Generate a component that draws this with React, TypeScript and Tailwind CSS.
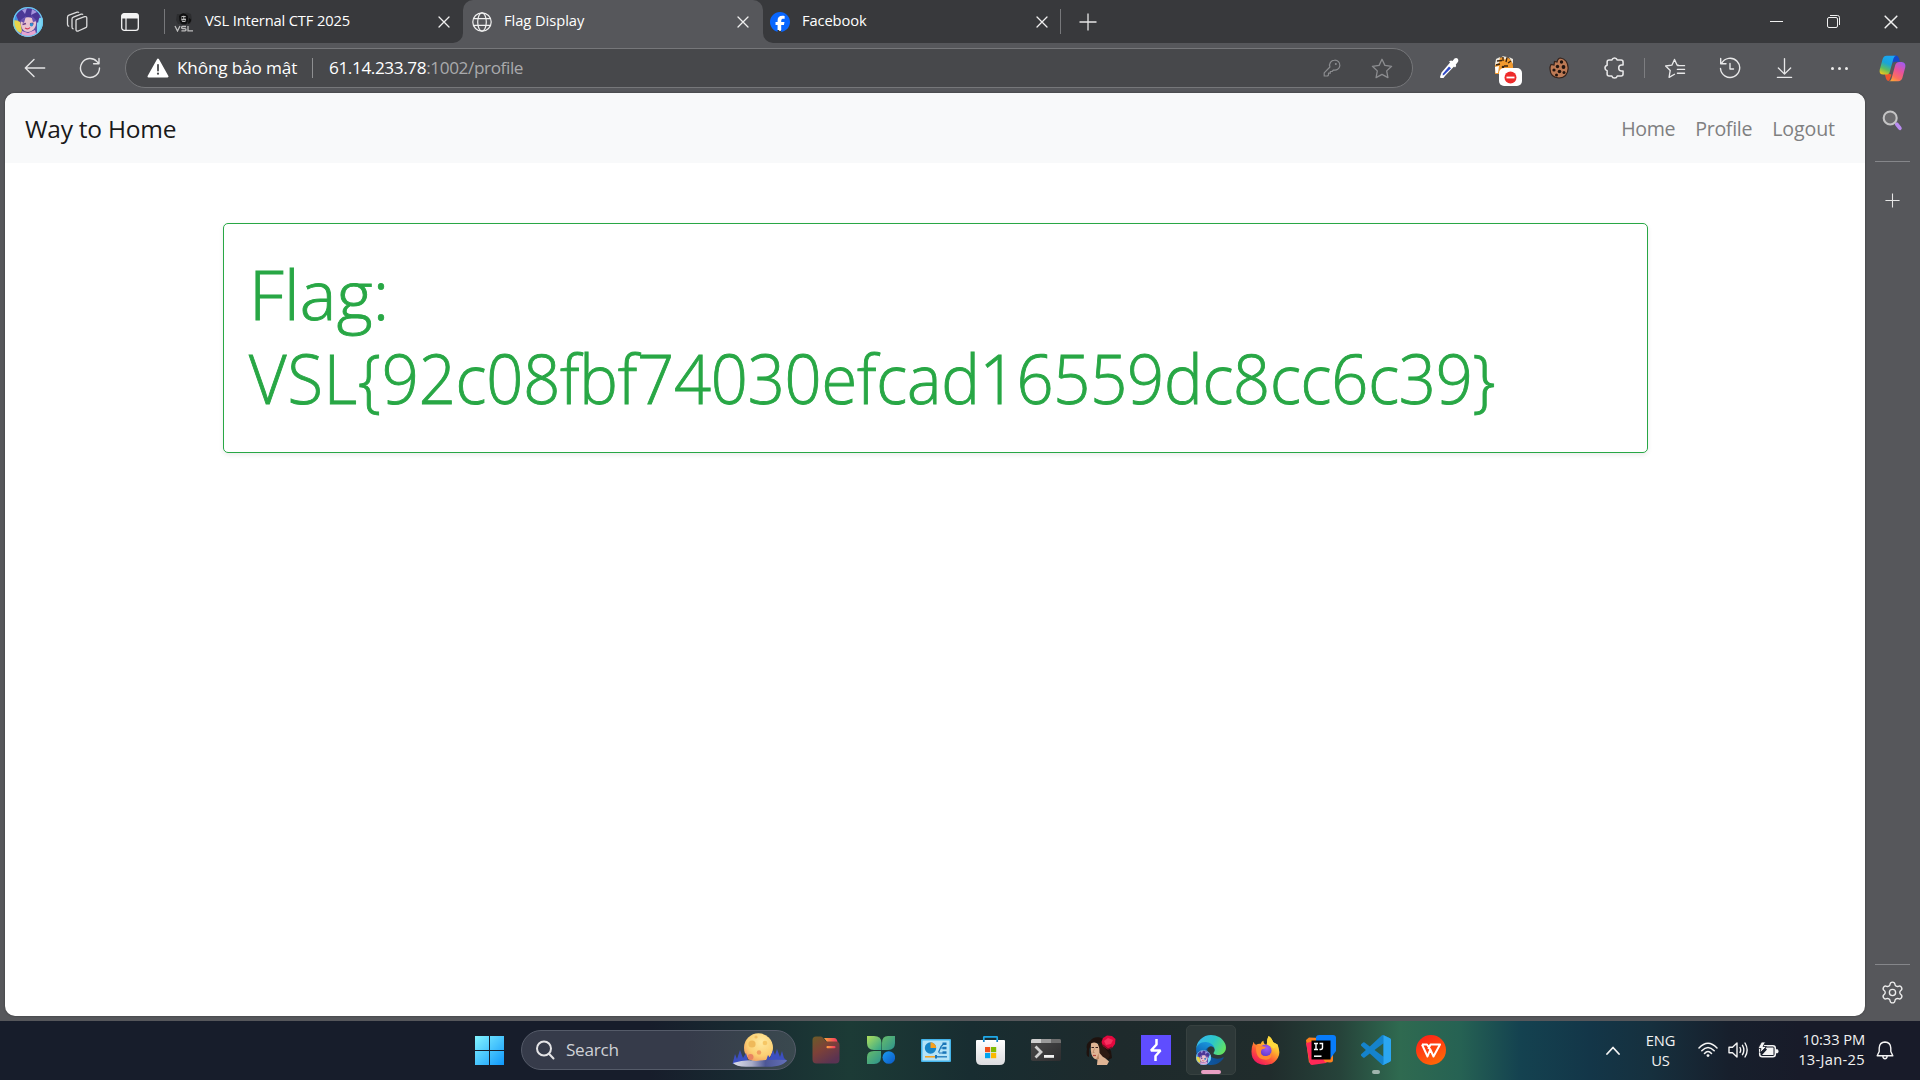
import React from "react";
import { Settings } from "lucide-react";
import { FaFacebook } from "react-icons/fa6";

type P = { className?: string };

/* ---------- Browser chrome icons ---------- */

function Avatar({ className }: P) {
  return (
    <svg viewBox="0 0 30 30" className={className}>
      <defs>
        <clipPath id="avc"><circle cx="15" cy="15" r="15" /></clipPath>
      </defs>
      <g clipPath="url(#avc)">
        <rect width="30" height="30" fill="#5a4fa8" />
        <path d="M0 6 6 3 5 14 0 18Z" fill="#4a8fe0" />
        <path d="M0 13 7 14 9 24 5 30 0 30Z" fill="#e8d54a" />
        <path d="M24 12 30 10V24L24 28Z" fill="#7fd6f5" />
        <path d="M3 8C8 0 22-1 27 7L25 16 20 11 13 10 6 15Z" fill="#4b3796" />
        <path d="M9 3 14 1 12 7ZM19 2 24 5 18 8Z" fill="#a593dc" />
        <path d="M8 14C10 9 20 9 23 14 24 21 19 25 15 25 10 25 7 20 8 14Z" fill="#e9c3cf" />
        <path d="M7 14 13 9 11 16ZM24 14 18 8 20 15Z" fill="#6a52b0" />
        <path d="M9.500 17.500 13 16.500M17 17 20.500 16.500" stroke="#6d3f88" strokeWidth="1.800" />
        <circle cx="18.500" cy="17.800" r="1.700" fill="#2e8fd0" />
        <path d="M12 21Q15 23 17 20.500" stroke="#d0405c" strokeWidth="1.200" fill="none" />
        <path d="M9 24 15 26 22 23 24 30H7Z" fill="#e7a4d0" />
        <path d="M4 24 9 27 8 30H2Z" fill="#8a3fb0" />
      </g>
      <circle cx="15" cy="15" r="14.300" fill="none" stroke="#69cdf0" strokeWidth="1.200" />
    </svg>
  );
}

function Workspaces({ className }: P) {
  return (
    <svg viewBox="0 0 22 22" className={className} fill="none" stroke="#dcdcdd" strokeWidth="1.300" strokeLinejoin="round">
      <path d="M10.500 8.600 18.600 5.700Q20.800 5.200 20.800 7.200V15Q20.800 16.200 19.700 16.700L12.300 20Q10 20.600 10 18.600V9.600Q10 8.900 10.500 8.600Z" />
      <path d="M17 3.600Q16.500 2.800 15.200 3.200L7.400 6.100Q6 6.700 6 8V16.200Q6 17.800 7.600 17.800" />
      <path d="M13 1.600Q12.400.8 11.200 1.200L3 4.200Q1.500 4.800 1.500 6.200V13.500Q1.500 15.300 3.200 15.300" />
    </svg>
  );
}

function TabActions({ className }: P) {
  return (
    <svg viewBox="0 0 18 18" className={className}>
      <rect x=".7" y=".7" width="16.600" height="16.600" rx="2.600" fill="none" stroke="#f3f3f3" strokeWidth="1.300" />
      <path d="M.5 5.400V3Q.5.5 3 .5H15Q17.500.5 17.500 3V5.400Z" fill="#f3f3f3" />
      <path d="M5 5V17" stroke="#f3f3f3" strokeWidth="1.200" />
    </svg>
  );
}

function VslFavicon({ className }: P) {
  return (
    <svg viewBox="0 0 20 20" className={className}>
      <path d="M3 2 7 2 13 .5 17 2 18 8 16 12 4 12 2 8Z" fill="#2c2d2f" />
      <path d="M5 4Q9-1.500 14 4V9L12 12.500H8L5.500 9Z" fill="#0f0f10" />
      <path d="M7.300 4.500Q9.500 3 12 4.500V7.500L11.300 10H8.300L7.300 7.500Z" fill="#bdbdbd" />
      <path d="M7.600 5H9.300V6.700H7.600ZM10.300 5H11.900V6.700H10.300ZM8.300 8H11.300V8.800H8.300Z" fill="#161616" />
      <path d="M15 6Q18 7 16.500 10L14 12Z" fill="#0e0e0e" />
      <path d="M1 14 3.500 19 6 14M12 14.500H8.600Q7.600 14.500 7.600 15.500T8.600 16.600H11Q12 16.600 12 17.700T11 18.800H7.400M14 14V18.800H19" fill="none" stroke="#bdbdbd" strokeWidth="1.300" />
    </svg>
  );
}

function Cross({ className }: P) {
  return (
    <svg viewBox="0 0 12 12" className={className} stroke="#f0f0f0" strokeWidth="1.300" strokeLinecap="round">
      <path d="M1 1 11 11M11 1 1 11" />
    </svg>
  );
}

function Globe({ className }: P) {
  return (
    <svg viewBox="0 0 20 20" className={className} fill="none" stroke="#f0f0f0" strokeWidth="1.200">
      <circle cx="10" cy="10" r="9.200" />
      <ellipse cx="10" cy="10" rx="4.300" ry="9.200" />
      <path d="M1.500 6.600H18.500M1.500 13.400H18.500" />
    </svg>
  );
}

function PlusIcon({ className }: P) {
  return (
    <svg viewBox="0 0 18 18" className={className} stroke="#e6e6e6" strokeWidth="1.300">
      <path d="M9 .5V17.500M.5 9H17.500" />
    </svg>
  );
}

function Back({ className }: P) {
  return (
    <svg viewBox="0 0 22 20" className={className} fill="none" stroke="#e4e4e5" strokeWidth="1.400" strokeLinecap="round" strokeLinejoin="round">
      <path d="M10 1.500 1.300 10 10 18.500M1.600 10H20.700" />
    </svg>
  );
}

function Reload({ className }: P) {
  return (
    <svg viewBox="0 0 22 22" className={className} fill="none" stroke="#e4e4e5" strokeWidth="1.400" strokeLinecap="round" strokeLinejoin="round">
      <path d="M20.500 11A9.500 9.500 0 1 1 18 4.600L19.800 6.500M20 1.500V6.700H14.600" />
    </svg>
  );
}

function Warning({ className }: P) {
  return (
    <svg viewBox="0 0 22 20" className={className}>
      <path d="M11 1.500 20.500 18.500H1.500Z" fill="#fff" stroke="#fff" strokeWidth="2" strokeLinejoin="round" />
      <path d="M11 6.800V12.500" stroke="#47484b" strokeWidth="1.800" strokeLinecap="round" />
      <circle cx="11" cy="15.700" r="1.100" fill="#47484b" />
    </svg>
  );
}

function KeyIcon({ className }: P) {
  return (
    <svg viewBox="0 0 18 18" className={className} fill="none" stroke="#8c8d90" strokeWidth="1.200" strokeLinejoin="round">
      <path d="M11.500 1.200A5 5 0 1 1 10.500 11L9 12.500H7.300V14.200H5.500V16L4.600 17H1.200V13.800L6.900 8A5 5 0 0 1 11.500 1.200Z" />
      <circle cx="12.800" cy="5" r="1" fill="#8c8d90" stroke="none" />
    </svg>
  );
}

function Star({ className }: P) {
  return (
    <svg viewBox="0 0 22 21" className={className} fill="none" stroke="#8c8d90" strokeWidth="1.300" strokeLinejoin="round">
      <path d="M11 1.300 13.900 7.400 20.600 8.300 15.700 12.900 16.900 19.600 11 16.400 5.100 19.600 6.300 12.900 1.400 8.300 8.100 7.400Z" />
    </svg>
  );
}

function Eyedropper({ className }: P) {
  return (
    <svg viewBox="0 0 20 22" className={className}>
      <path d="M11.500 5 2.500 15.500 1 20 1.500 21H4.500L6 19 15.500 9Z" fill="#fff" />
      <path d="M10 9.500 4 16.500 3.600 18.600 5 18 12 11.200Z" fill="#2f49c8" />
      <path d="M10 4.500 12 3.500 13.500 4 15.500 1.500Q17.500.3 19 2 20 4 18.500 5.500L16.800 7.500 17.200 9 16 10.500Z" fill="#fff" />
    </svg>
  );
}

function TigerBlocked({ className }: P) {
  return (
    <svg viewBox="0 0 30 32" className={className}>
      <path d="M3 13Q3 3 12 3Q21 3 21 13V20H3Z" fill="#f29a2e" />
      <path d="M3 11 4 5 8 3 7 9ZM10 2 15 3 13 6ZM17 3 21 5 21 10Z" fill="#ece8e0" />
      <path d="M3 13 7 12 6 19H3.500Z" fill="#fff" />
      <path d="M5 7 10 6.500M4 11 8 10M11 3V7M15 3.500 14 8M19 7 16 9M12 12H16" stroke="#3a2410" strokeWidth="1.300" />
      <circle cx="11" cy="13" r="1.300" fill="#3a2410" />
      <rect x="7" y="14" width="23" height="18" rx="5" fill="#fff" />
      <circle cx="18.500" cy="23.500" r="6" fill="#ee2b2b" />
      <rect x="14.500" y="22.600" width="8" height="1.800" fill="#fff" />
    </svg>
  );
}

function CookieIcon({ className }: P) {
  return (
    <svg viewBox="0 0 20 22" className={className}>
      <path d="M11.500 1Q18.800 2.500 19.200 11 18.800 20.500 10 21 1.300 20.500 1 12 .8 9.500 2 7.500L5 8 5.500 4.500 8 5Q9 1 11.500 1Z" fill="#bd7a55" stroke="#33231d" strokeWidth="1.200" />
      <g fill="#21140f">
        <circle cx="12.500" cy="5" r="1.700" /><circle cx="8.500" cy="9.500" r="1.700" /><circle cx="14.500" cy="10" r="1.900" />
        <circle cx="5" cy="13" r="1.600" /><circle cx="10.500" cy="14.500" r="1.800" /><circle cx="15" cy="15.500" r="1.500" /><circle cx="7.500" cy="18" r="1.500" />
      </g>
    </svg>
  );
}

function PuzzleIcon({ className }: P) {
  return (
    <svg viewBox="0 0 20 22" className={className} fill="none" stroke="#e8e8e9" strokeWidth="1.400" strokeLinejoin="round">
      <path d="M8 3.700A2.600 2.600 0 0 1 13 3.700H16.500Q18.300 3.700 18.300 5.500V8.300H17A2.700 2.700 0 0 0 17 13.700H18.300V16.500Q18.300 18.300 16.500 18.300H13A2.600 2.600 0 0 1 8 18.300H5.500Q3.700 18.300 3.700 16.500V13.600A2.700 2.700 0 0 1 3.700 8.400V5.500Q3.700 3.700 5.500 3.700Z" />
    </svg>
  );
}

function FavList({ className }: P) {
  return (
    <svg viewBox="0 0 22 22" className={className} fill="none" stroke="#e8e8e9" strokeWidth="1.400" strokeLinejoin="round" strokeLinecap="round">
      <path d="M14.500 7.500H13.300L10.500 1.500 7.700 7.500 1.200 8.400 6 13 4.800 20.300 10.500 17M14 8H21M13.500 12H21M13.500 16H21" />
    </svg>
  );
}

function HistoryIcon({ className }: P) {
  return (
    <svg viewBox="0 0 22 22" className={className} fill="none" stroke="#e8e8e9" strokeWidth="1.400" strokeLinejoin="round" strokeLinecap="round">
      <path d="M2.500 6.500A9.600 9.600 0 1 1 1.500 11.500M1.700 1.500V6.800H7M11 6.500V12H14.500" />
    </svg>
  );
}

function DownloadIcon({ className }: P) {
  return (
    <svg viewBox="0 0 18 22" className={className} fill="none" stroke="#e8e8e9" strokeWidth="1.400" strokeLinejoin="round" strokeLinecap="round">
      <path d="M9 1V17M2.500 11 9 17.500 15.500 11M1.500 21H16.500" />
    </svg>
  );
}

function Copilot({ className }: P) {
  return (
    <svg viewBox="0 0 28 28" className={className}>
      <defs>
        <linearGradient id="cp1" x1=".6" y1="0" x2=".2" y2="1">
          <stop offset="0" stopColor="#1aa6f5" /><stop offset=".4" stopColor="#19a4d8" /><stop offset=".7" stopColor="#5cbd62" /><stop offset="1" stopColor="#f2c81a" />
        </linearGradient>
        <linearGradient id="cp2" x1=".8" y1="0" x2=".3" y2="1">
          <stop offset="0" stopColor="#a05bf0" /><stop offset=".45" stopColor="#e8529a" /><stop offset=".8" stopColor="#fb6f5c" /><stop offset="1" stopColor="#fba13c" />
        </linearGradient>
      </defs>
      <path d="M15 .5H17.500Q20 .7 20.800 3.500L21.700 7H17Q14.500 7 13.800 9.500Z" fill="#1547c8" />
      <path d="M6 20 11 19.500 13 20.500 10.500 27Q8 27 7.300 24.500Z" fill="#f0542c" />
      <path d="M8 .7H17.500Q15.700 1.200 15 3.700L11.300 17Q10.400 20.300 7 20.300H4.500Q0 20.300.7 15.500L3.700 4.300Q4.800.7 8 .7Z" fill="url(#cp1)" />
      <path d="M20 27.300H10.500Q12.300 26.800 13 24.300L16.700 11Q17.600 7.200 21 7.200H23.500Q28 7.500 27.300 12.500L24.300 23.700Q23.200 27.300 20 27.300Z" fill="url(#cp2)" />
    </svg>
  );
}

function SideSearch({ className }: P) {
  return (
    <svg viewBox="0 0 20 20" className={className}>
      <path d="M14 13.500 17 17.300" stroke="#b98cf0" strokeWidth="3.600" strokeLinecap="round" />
      <circle cx="7.800" cy="7.600" r="6.200" fill="#6b6b6e" stroke="#c4c4c5" strokeWidth="2" />
    </svg>
  );
}

/* ---------- Taskbar icons ---------- */

function Windows({ className }: P) {
  return (
    <svg viewBox="0 0 29 29" className={className}>
      <defs>
        <linearGradient id="win" x1="0" y1="0" x2="1" y2="1" gradientUnits="objectBoundingBox">
          <stop offset="0" stopColor="#83f4ff" /><stop offset="1" stopColor="#0f97fb" />
        </linearGradient>
      </defs>
      <path d="M0 0H14V14H0ZM15 0H29V14H15ZM0 15H14V29H0ZM15 15H29V29H15Z" fill="url(#win)" />
    </svg>
  );
}

function MoonScene({ className }: P) {
  return (
    <svg viewBox="0 0 56 34" className={className}>
      <defs>
        <radialGradient id="moon" cx=".6" cy=".3" r=".8">
          <stop offset="0" stopColor="#ffe9a0" /><stop offset=".6" stopColor="#fbcf72" /><stop offset="1" stopColor="#ef8f5c" />
        </radialGradient>
        <linearGradient id="snow">
          <stop offset="0" stopColor="#dfe0ea" /><stop offset=".35" stopColor="#a9acc8" /><stop offset=".6" stopColor="#4d5796" /><stop offset="1" stopColor="#6470b8" />
        </linearGradient>
      </defs>
      <circle cx="26.500" cy="14.800" r="14.500" fill="url(#moon)" />
      <circle cx="20" cy="11" r="3.600" fill="#efb95a" /><circle cx="33" cy="10" r="2.300" fill="#f6c766" />
      <circle cx="27" cy="19.500" r="2.200" fill="#f1a05e" /><circle cx="18.500" cy="24" r="3" fill="#e98461" /><circle cx="24" cy="4" r="1.600" fill="#f3c063" />
      <path d="M.5 31 3 21 5 26 8 17 11 25 14 20 16 28 17 30ZM34 28 36 22 38 25 41 17 43 22 45 16 48 24 50 18 52 25 55 28 50 31H36Z" fill="#3c4fc0" />
      <path d="M1 30Q14 26 24 28 40 26 55 27 52 33.500 36 33.800H14Q4 33.500 1 30Z" fill="url(#snow)" />
    </svg>
  );
}

function Files({ className }: P) {
  return (
    <svg viewBox="0 0 28 28" className={className}>
      <defs>
        <linearGradient id="fl" x1="0" y1="0" x2=".6" y2="1"><stop offset="0" stopColor="#6b5c28" /><stop offset=".5" stopColor="#7d4138" /><stop offset="1" stopColor="#5a3352" /></linearGradient>
        <linearGradient id="fl2"><stop offset="0" stopColor="#ffa53d" /><stop offset="1" stopColor="#f23560" /></linearGradient>
      </defs>
      <path d="M12 2H22Q25 2 25.500 6H15Z" fill="url(#fl2)" />
      <path d="M.5 4Q.5.5 4 .5H9Q10.500.5 12 3L14 5.500H24Q27.500 5.500 27.500 9V23.500Q27.500 27.500 23.500 27.500H4.500Q.5 27.500.5 23.500Z" fill="url(#fl)" />
      <rect x="14.500" y="10" width="9" height="2.200" rx="1" fill="url(#fl2)" />
    </svg>
  );
}

function Clover({ className }: P) {
  return (
    <svg viewBox="0 0 28 28" className={className}>
      <defs>
        <linearGradient id="c1" x1="0" y1="0" x2="1" y2="1"><stop offset="0" stopColor="#aedd5c" /><stop offset="1" stopColor="#2fa58c" /></linearGradient>
        <linearGradient id="c2" x1="0" y1="0" x2="1" y2="1"><stop offset="0" stopColor="#67bc6a" /><stop offset="1" stopColor="#2b938f" /></linearGradient>
        <linearGradient id="c3" x1="0" y1="0" x2="1" y2="1"><stop offset="0" stopColor="#1b9bf0" /><stop offset="1" stopColor="#0b59c8" /></linearGradient>
      </defs>
      <path d="M0 0H7Q14.500 0 14.500 7V14H7Q0 14 0 7Z" fill="url(#c1)" />
      <path d="M28 0V7Q28 14 21 14H15V7Q15 0 21 0Z" fill="url(#c2)" />
      <path d="M0 28V21Q0 15 7 15H14V21Q14 28 7 28Z" fill="url(#c2)" />
      <circle cx="21.800" cy="21.500" r="6.300" fill="url(#c3)" />
    </svg>
  );
}

function ControlPanel({ className }: P) {
  return (
    <svg viewBox="0 0 30 23" className={className}>
      <rect width="30" height="23" rx="1" fill="#45b4ea" />
      <rect x="1.500" y="1.500" width="27" height="20" fill="#b4e3f8" />
      <circle cx="9.500" cy="9" r="5.700" fill="#1785c8" />
      <path d="M9.500 9V3.300A5.700 5.700 0 0 1 15.200 9Z" fill="#f8a01c" />
      <path d="M17.500 13.500 20 7.500 23 4.500M19 9H22M18 14H22" stroke="#1a75b8" strokeWidth="1.200" fill="none" />
      <rect x="21.500" y="3.500" width="4" height="2.500" fill="#1a75b8" /><rect x="21.500" y="7.800" width="4" height="2.500" fill="#1a75b8" /><rect x="21.500" y="12.300" width="4" height="2.500" fill="#1a75b8" />
      <path d="M4 17.800H14" stroke="#f8a01c" strokeWidth="1.500" /><path d="M14 17.800H26" stroke="#1a75b8" strokeWidth="1.300" />
      <rect x="14" y="16" width="2" height="3.500" fill="#1a75b8" />
    </svg>
  );
}

function Store({ className }: P) {
  return (
    <svg viewBox="0 0 29 29" className={className}>
      <defs><linearGradient id="st" x1="0" y1="0" x2="0" y2="1"><stop offset="0" stopColor="#fff" /><stop offset="1" stopColor="#dcdcdf" /></linearGradient></defs>
      <path d="M7.800 6V1.300Q7.800.8 8.300.8H20.700Q21.200.8 21.200 1.300V6" fill="none" stroke="#1fa9e8" strokeWidth="1.700" />
      <path d="M0 5Q0 4 1 4H28Q29 4 29 5V23.500Q29 29 23.500 29H5.500Q0 29 0 23.500Z" fill="url(#st)" />
      <path d="M7.800 4V6M21.200 4V6" stroke="#1785c8" strokeWidth="1.700" />
      <rect x="9" y="11" width="5.200" height="5.200" fill="#f1511b" /><rect x="15" y="11" width="5.200" height="5.200" fill="#80bb02" />
      <rect x="9" y="17" width="5.200" height="5.200" fill="#00a4ef" /><rect x="15" y="17" width="5.200" height="5.200" fill="#fbb902" />
    </svg>
  );
}

function Terminal({ className }: P) {
  return (
    <svg viewBox="0 0 30 22" className={className}>
      <defs><linearGradient id="tm" x1="0" y1="0" x2="1" y2="1"><stop offset="0" stopColor="#4b4b4b" /><stop offset="1" stopColor="#2d2d2f" /></linearGradient></defs>
      <rect width="30" height="22" rx="1.800" fill="url(#tm)" />
      <path d="M0 4V1.500Q0 0 1.500 0H10V4Z" fill="#cfcfcf" /><path d="M10 0H20V4H10Z" fill="#9a9a9a" /><path d="M20 0H28.500Q30 0 30 1.500V4H20Z" fill="#6e6e6e" />
      <path d="M4.500 7.500 10 13 4.500 18.500" fill="none" stroke="#cfcfcf" strokeWidth="2.800" />
      <rect x="13" y="16" width="10" height="2.800" fill="#f2f2f2" />
    </svg>
  );
}

function RoseLady({ className }: P) {
  return (
    <svg viewBox="0 0 30 30" className={className}>
      <path d="M4 6Q7 1.500 13 2.300 20 4 21 10L25 16 26 23 22 25 16 16 13 8 6 8 3 14 3 22Q-.5 21 1 14-.5 9 4 6Z" fill="#1e120e" />
      <path d="M5 8.500Q9 6 12.500 9.500 14.500 14 14 17L19 23 23 26.500 21 30H11L11.500 24.500Q8 24.500 6.500 21.500 5 19 4.800 15Z" fill="#dfb494" />
      <path d="M12 9Q14 13 13.500 18L17 22 22 24 24 20 19 13 15 7Z" fill="#2e1a12" />
      <path d="M12.500 18Q11.500 22 10 24.200L13 24Z" fill="#b98563" />
      <path d="M5.500 12.500H8M9.500 12.500H12" stroke="#3a211a" strokeWidth="1.200" />
      <path d="M7 20.500H10" stroke="#b2443c" strokeWidth="1.200" />
      <path d="M8.500 13.500 7 17.500H8.500" stroke="#b98563" strokeWidth=".8" fill="none" />
      <path d="M17 3 21 .5 26 1 29.500 4 29 9 26 13 21 14 17 11 15.500 7Z" fill="#e3093f" />
      <path d="M18 6 22 3 27 5 25 9 20 10Z" fill="#f8305f" /><path d="M17 10 22 14 26 12" stroke="#7c0f26" strokeWidth="1.300" fill="none" />
    </svg>
  );
}

function Burp({ className }: P) {
  return (
    <svg viewBox="0 0 30 30" className={className}>
      <rect width="30" height="30" fill="#5f4dff" />
      <path d="M15.500 4V9.500L10 15.500H19.500L14.500 21V26" fill="none" stroke="#fff" strokeWidth="2.500" strokeLinejoin="bevel" />
    </svg>
  );
}

function Edge({ className }: P) {
  return (
    <svg viewBox="4 4 257 257" className={className}>
      <defs>
        <linearGradient id="e1" x1=".2" y1=".5" x2="1" y2=".5"><stop offset="0" stopColor="#0c59a4" /><stop offset="1" stopColor="#114a8b" /></linearGradient>
        <linearGradient id="e2" x1=".7" y1="0" x2=".3" y2="1"><stop offset="0" stopColor="#1b9de2" /><stop offset=".5" stopColor="#1272c0" /><stop offset="1" stopColor="#0a4a9c" /></linearGradient>
        <linearGradient id="e3" x1="0" y1=".3" x2="1" y2=".7"><stop offset="0" stopColor="#35b7ee" /><stop offset=".5" stopColor="#2cc6c8" /><stop offset="1" stopColor="#66e45c" /></linearGradient>
      </defs>
      <path fill="url(#e1)" d="M235.680 195.490a93.730 93.730 0 0 1-10.540 4.710 101.870 101.870 0 0 1-35.900 6.460c-47.320 0-88.540-32.550-88.540-74.320A31.480 31.480 0 0 1 117.130 105c-42.800 1.800-53.800 46.400-53.800 72.530 0 73.880 68.090 81.370 82.760 81.370 7.910 0 19.840-2.300 27-4.560l1.310-.44a128.340 128.340 0 0 0 66.600-52.800 4 4 0 0 0-5.320-5.610z" />
      <path fill="url(#e2)" d="M110.340 246.340a79.200 79.200 0 0 1-22.740-21.340 80.720 80.720 0 0 1 29.530-120c3.120-1.470 8.450-4.130 15.540-4a32.350 32.350 0 0 1 25.690 13 31.880 31.880 0 0 1 6.360 18.660c0-.21 24.460-79.600-80-79.600-43.900 0-80 41.660-80 78.210a130.150 130.150 0 0 0 12.110 56 128 128 0 0 0 156.380 67.110 75.550 75.550 0 0 1-62.780-8z" />
      <path fill="url(#e3)" d="M156.940 153.340c-.81 1.050-3.300 2.500-3.300 5.660 0 2.610 1.700 5.120 4.720 7.230 14.380 10 41.490 8.680 41.560 8.680a59.560 59.560 0 0 0 30.270-8.350 61.380 61.380 0 0 0 30.430-52.880c.26-22.410-8-37.310-11.340-43.910-21.190-41.450-66.930-65.290-116.670-65.290a128 128 0 0 0-128 126.200c.48-36.540 36.800-66.050 80-66.050 3.500 0 23.460.34 42 10.070 16.340 8.580 24.900 18.940 30.850 29.210 6.180 10.670 7.280 24.150 7.280 29.520s-2.740 13.330-7.800 19.910z" />
    </svg>
  );
}

function Firefox({ className }: P) {
  return (
    <svg viewBox="0 0 28 28" className={className}>
      <defs>
        <linearGradient id="f1" x1=".8" y1=".1" x2=".25" y2=".95"><stop offset="0" stopColor="#fff04a" /><stop offset=".35" stopColor="#ffb02e" /><stop offset=".65" stopColor="#ff5a36" /><stop offset="1" stopColor="#f0195e" /></linearGradient>
        <radialGradient id="f2" cx=".6" cy=".3" r=".8"><stop offset="0" stopColor="#a35cf5" /><stop offset="1" stopColor="#5a36c8" /></radialGradient>
      </defs>
      <path d="M2.500 5.500Q3 8 5 8.500 7 7 9.500 7.500 10 5 12 4.500 12 8 15 8.500 16 4 17 0 20 2 21.500 6 25 8 25.500 8 29 16 26 21 22 28 14 28 5 28 1.500 21-1 14 2.500 5.500Z" fill="url(#f1)" />
      <path d="M17 0Q14.500 4 16 8.500L22 12 26 9Q24 7 21.500 6 20 2 17 0Z" fill="#ffd83c" />
      <circle cx="14" cy="14" r="5.800" fill="url(#f2)" />
      <path d="M5 10Q9 9 14.500 10.500 13.500 12.500 10.500 12.800 9 15 10 17.500 12 20 16 19 19 18.500 19.500 16 21 22 14.500 23 7 23 5.500 17 4.500 13 5 10Z" fill="#ff8a32" />
    </svg>
  );
}

function IntelliJ({ className }: P) {
  return (
    <svg viewBox="0 0 30 30" className={className}>
      <path d="M0 5 3 2.500 14 3 12 20 3 28Z" fill="#fc801d" />
      <path d="M0 8 9 6 22 26 20 28 6 30Q4 30 3.500 27Z" fill="#fe2857" />
      <path d="M16 22 27 14 27 25Q27 27.500 24 27.500L19 27Z" fill="#fc801d" />
      <path d="M10 2Q10.500 0 13 0H27Q30 0 30 3V16L24 24 10 8Z" fill="#087cfa" />
      <rect x="5.500" y="5.500" width="19" height="19" fill="#000" />
      <path d="M8 8.500H12M10 8.500V14.500M8 14.500H12M13.500 8.500H16.500V12.500Q16.500 14.500 14.500 14.500H13.500" stroke="#fff" strokeWidth="1.400" fill="none" />
      <path d="M8 21.200H15.500" stroke="#fff" strokeWidth="1.500" />
    </svg>
  );
}

function VSCode({ className }: P) {
  return (
    <svg viewBox="0 0 100 100" className={className}>
      <path fillRule="evenodd" fill="#1583cc" d="M96.460 10.800 75.860.88a6.230 6.230 0 0 0-7.100 1.200L29.360 38.040 12.190 25.010a4.160 4.160 0 0 0-5.320.24L1.370 30.250a4.170 4.170 0 0 0 0 6.160L16.250 50 1.360 63.570a4.170 4.170 0 0 0 0 6.170l5.500 5c1.500 1.360 3.730 1.460 5.320.24l17.170-13.030 39.400 35.950a6.220 6.220 0 0 0 7.100 1.200l20.600-9.900A6.250 6.250 0 0 0 100 83.570V16.430a6.250 6.250 0 0 0-3.540-5.630zM75.010 72.700 45.100 50l29.900-22.700z" />
      <path fill="#2ba6f2" d="M75 1 96.500 10.800Q100 12.500 100 16.400V83.600Q100 87.500 96.500 89.200L75.900 99.100Q71.500 100.500 68.800 98 75 101 75 94Z" />
    </svg>
  );
}

function Wps({ className }: P) {
  return (
    <svg viewBox="0 0 30 30" className={className}>
      <defs><linearGradient id="wp" x1="0" y1="0" x2=".5" y2="1"><stop offset="0" stopColor="#ff1a1a" /><stop offset="1" stopColor="#ff6408" /></linearGradient></defs>
      <circle cx="15" cy="15" r="15" fill="url(#wp)" />
      <path d="M6 9.500 11.500 21.500 14.300 14.500 17.500 21.500 24 9.500H14.500L12.300 14M6 9.500H11L14.300 14.500" fill="none" stroke="#fff" strokeWidth="2" strokeLinejoin="round" />
    </svg>
  );
}

/* ---------- Tray icons ---------- */

function Wifi({ className }: P) {
  return (
    <svg viewBox="0 0 20 16" className={className} fill="none" stroke="#f4f4f4" strokeWidth="1.500" strokeLinecap="round">
      <path d="M1 6Q10-3.500 19 6M3.800 8.800Q10 2 16.200 8.800M6.500 11.500Q10 7.500 13.500 11.500" />
      <circle cx="10" cy="13.600" r="1.400" fill="#f4f4f4" stroke="none" />
    </svg>
  );
}

function Speaker({ className }: P) {
  return (
    <svg viewBox="0 0 20 18" className={className} fill="none" stroke="#f4f4f4" strokeWidth="1.400" strokeLinecap="round" strokeLinejoin="round">
      <path d="M1 6.300H4.500L9 2V16L4.500 11.700H1ZM12 6.500Q13.300 9 12 11.500M14.500 4.300Q17.200 9 14.500 13.700M17 2Q21.300 9 17 16" />
    </svg>
  );
}

function Battery({ className }: P) {
  return (
    <svg viewBox="0 0 21 18" className={className}>
      <rect x="1.700" y="4.700" width="15.600" height="11" rx="2.500" fill="none" stroke="#f4f4f4" strokeWidth="1.500" />
      <path d="M7 6.500H15.500V14H4L9 8.500Z" fill="#f4f4f4" />
      <path d="M18 8.200H19.500Q20.500 8.500 20.500 10.200T19.500 12.200H18Z" fill="#f4f4f4" />
      <path d="M3.500 1 0 7.500H3L2 12 8.500 5.500H5L7.500 1Z" fill="#f4f4f4" stroke="#181d2a" strokeWidth=".8" />
    </svg>
  );
}

function Bell({ className }: P) {
  return (
    <svg viewBox="0 0 18 19" className={className} fill="none" stroke="#f4f4f4" strokeWidth="1.400" strokeLinejoin="round">
      <path d="M9 1Q14.500 1.300 14.800 7V10.500L16.800 14.800H1.200L3.200 10.500V7Q3.500 1.300 9 1ZM6.800 15Q7 17.700 9 17.700T11.200 15" />
    </svg>
  );
}

/* ---------- Sections ---------- */

function TabStrip() {
  return (
    <div className="flex h-[43px] shrink-0 bg-[#56575b] text-[14.7px] text-white">
      <div className="flex w-[463px] items-center rounded-br-[10px] bg-[#38393c] pl-[13px]">
        <Avatar className="size-[30px]" />
        <Workspaces className="ml-[23px] size-[22px]" />
        <TabActions className="ml-[33px] size-[18px]" />
        <div className="ml-[25px] h-[25px] w-px bg-[#77787b]" />
        <VslFavicon className="ml-[9px] size-[20px]" />
        <span className="ml-[11px] w-[233px] pb-[3px] tracking-[-0.14px] whitespace-nowrap">VSL Internal CTF 2025</span>
        <Cross className="mt-px size-[12px]" />
      </div>
      <div className="w-[300px] bg-[#38393c]">
        <div className="flex h-full items-center rounded-t-[10px] bg-[#56575b] pl-[9px]">
          <Globe className="mt-px size-[20px]" />
          <span className="ml-[12px] w-[233px] pb-[3px] tracking-[-0.05px] whitespace-nowrap">Flag Display</span>
          <Cross className="mt-px size-[12px]" />
        </div>
      </div>
      <div className="flex flex-1 items-center rounded-bl-[10px] bg-[#38393c] pl-[7px]">
        <span className="mt-px flex size-[20px] rounded-full bg-[radial-gradient(circle,#fff_60%,transparent_61%)]">
          <FaFacebook className="size-full text-[#0866ff]" />
        </span>
        <span className="ml-[12px] w-[234px] pb-[3px] tracking-[-0.1px] whitespace-nowrap">Facebook</span>
        <Cross className="mt-px size-[12px]" />
        <div className="ml-[12px] h-[25px] w-px bg-[#77787b]" />
        <PlusIcon className="ml-[18px] size-[18px]" />
        <div className="ml-auto flex items-center pr-[22px]">
          <div className="h-px w-[13px] bg-[#f0f0f0]" />
          <svg viewBox="0 0 13 13" className="ml-[44px] size-[13px]" fill="none" stroke="#f0f0f0">
            <rect x=".5" y="2.500" width="10" height="10" rx="1.500" />
            <path d="M3 .5H10.500Q12.500.5 12.500 2.500V10" />
          </svg>
          <Cross className="ml-[44px] size-[14px]" />
        </div>
      </div>
    </div>
  );
}

function Toolbar() {
  return (
    <div className="flex h-[50px] shrink-0 items-center bg-[#56575b] pl-[24px]">
      <Back className="h-[20px] w-[22px]" />
      <Reload className="ml-[33px] size-[22px]" />
      <div className="ml-[24px] flex h-[40px] w-[1288px] items-center rounded-full border border-[#76777a] bg-[#47484b] pl-[21px] text-[17.2px] text-white">
        <Warning className="h-[20px] w-[22px]" />
        <span className="ml-[8px] w-[135px] pb-px tracking-[-0.15px] whitespace-nowrap">Không bảo mật</span>
        <div className="h-[20px] w-px bg-[#8e8f91]" />
        <span className="ml-[16px] pb-px tracking-[-0.4px] whitespace-nowrap">
          61.14.233.78<span className="text-[#a9aaac]">:1002/profile</span>
        </span>
        <KeyIcon className="ml-auto size-[18px]" />
        <Star className="mr-[19px] ml-[30px] h-[21px] w-[22px]" />
      </div>
      <Eyedropper className="ml-[26px] h-[24px] w-[20px]" />
      <TigerBlocked className="mt-[4px] ml-[33px] h-[32px] w-[30px]" />
      <CookieIcon className="ml-[27px] h-[22px] w-[20px]" />
      <PuzzleIcon className="ml-[34px] h-[24px] w-[22px]" />
      <div className="ml-[19px] h-[20px] w-px bg-[#7d7e81]" />
      <FavList className="ml-[19px] h-[21px] w-[22px]" />
      <HistoryIcon className="ml-[33px] size-[22px]" />
      <DownloadIcon className="ml-[35px] h-[22px] w-[17px]" />
      <div className="ml-[38px] flex gap-[4px]">
        <i className="size-[3px] rounded-full bg-[#ececec]" />
        <i className="size-[3px] rounded-full bg-[#ececec]" />
        <i className="size-[3px] rounded-full bg-[#ececec]" />
      </div>
      <Copilot className="ml-[31px] size-[27px]" />
    </div>
  );
}

function Page() {
  return (
    <main className="ml-[5px] flex w-[1860px] flex-col overflow-hidden rounded-[10px] bg-white shadow-[0_0_2px_#333]">
      <nav className="flex h-[70px] items-center bg-[#f8f9fa] px-[20px] pt-[2px]">
        <a className="text-[24.5px] tracking-[-0.25px] text-[#1a1a1a]">Way to Home</a>
        <div className="ml-auto flex gap-[20px] pr-[10px] text-[19.6px] text-[#7f8081]">
          <a className="tracking-[-0.35px]">Home</a>
          <a className="tracking-[-0.3px]">Profile</a>
          <a className="tracking-[-0.1px]">Logout</a>
        </div>
      </nav>
      <section className="mt-[60px] ml-[218px] h-[230px] w-[1425px] rounded-[5px] border border-[#28a745] px-[25px] pt-[27px] shadow-[0_2px_5px_rgba(0,0,0,0.08)]">
        <h1 className="text-[69px] leading-[84px] font-light text-[#28a745] [-webkit-text-stroke:0.9px_#28a745]">
          <span className="block tracking-[0.3px]">Flag:</span>
          <span className="block origin-left scale-x-[0.941] tracking-[-0.2px] whitespace-nowrap">
            <span className="tracking-[1px]">VSL{"{"}</span>92c08fbf74030efcad16559dc8cc6c39{"}"}
          </span>
        </h1>
      </section>
    </main>
  );
}

function Sidebar() {
  return (
    <aside className="flex flex-1 flex-col items-center pt-[17px]">
      <SideSearch className="size-[21px]" />
      <div className="mt-[30px] h-px w-[35px] bg-[#85868a]" />
      <PlusIcon className="mt-[31px] size-[15px]" />
      <div className="mt-auto h-px w-[35px] bg-[#85868a]" />
      <Settings className="mt-[15px] mb-[11px] size-[25px] text-[#ececec]" strokeWidth={1.3} />
    </aside>
  );
}

function Cell({ children }: { children: React.ReactNode }) {
  return <div className="flex h-full w-[55px] items-center justify-center">{children}</div>;
}

function Taskbar() {
  return (
    <footer className="flex h-[59px] shrink-0 items-center bg-[linear-gradient(90deg,#171d2b_0px,#171d2b_650px,#182a31_740px,#1c3b36_850px,#182d31_970px,#1e2a2c_1120px,#202c2c_1270px,#26433a_1340px,#2f6a50_1400px,#266253_1460px,#144250_1520px,#133648_1590px,#16303e_1650px,#171f2c_1730px,#181b29_1800px)] pb-px text-[#f2f2f2]">
      <Windows className="ml-[475px] size-[29px]" />
      <div className="ml-[17px] flex h-[40px] w-[275px] items-center rounded-full border border-[#555b69] bg-[linear-gradient(90deg,#363b4a_60%,#3a494f)] pl-[13px]">
        <svg viewBox="0 0 20 20" className="size-[20px]" fill="none" stroke="#e4e4e6" strokeWidth="2" strokeLinecap="round">
          <circle cx="9" cy="8.500" r="7" /><path d="M14 13.700 18.500 18.500" />
        </svg>
        <span className="ml-[11px] text-[17.2px] tracking-[-0.3px] text-[#cfd1d6]">Search</span>
        <MoonScene className="mr-[7px] ml-auto h-[34px] w-[56px]" />
      </div>
      <div className="ml-[2px] flex h-full">
        <Cell><Files className="size-[28px]" /></Cell>
        <Cell><Clover className="size-[28px]" /></Cell>
        <Cell><ControlPanel className="h-[23px] w-[30px]" /></Cell>
        <Cell><Store className="size-[29px]" /></Cell>
        <Cell><Terminal className="h-[22px] w-[30px]" /></Cell>
        <Cell><RoseLady className="size-[30px]" /></Cell>
        <Cell><Burp className="size-[30px]" /></Cell>
        <Cell>
          <div className="relative flex size-[50px] items-center justify-center rounded-[5px] border border-[#374140] bg-[#2d3838]">
            <Edge className="size-[30px]" />
            <Avatar className="absolute bottom-[9px] left-[9px] size-[15px]" />
            <i className="absolute bottom-0 h-[4px] w-[20px] rounded-full bg-[#e89fc3]" />
          </div>
        </Cell>
        <Cell><Firefox className="size-[29px]" /></Cell>
        <Cell><IntelliJ className="size-[30px]" /></Cell>
        <Cell>
          <div className="relative flex size-[50px] items-center justify-center">
            <VSCode className="size-[30px]" />
            <i className="absolute bottom-px h-[4px] w-[8px] rounded-full bg-[#9fb5ad]" />
          </div>
        </Cell>
        <Cell><Wps className="size-[30px]" /></Cell>
      </div>
      <div className="ml-auto flex items-center pr-[26px] text-[14.7px] leading-[20px]">
        <svg viewBox="0 0 14 9" className="h-[9px] w-[14px]" fill="none" stroke="#f4f4f4" strokeWidth="1.800" strokeLinecap="round" strokeLinejoin="round">
          <path d="M1 8 7 1.500 13 8" />
        </svg>
        <div className="ml-[26px] pb-px text-center tracking-[-0.2px]">
          <div>ENG</div>
          <div>US</div>
        </div>
        <Wifi className="ml-[23px] h-[16px] w-[20px]" />
        <Speaker className="ml-[10px] h-[18px] w-[20px]" />
        <Battery className="ml-[10px] h-[18px] w-[21px]" />
        <div className="ml-[19px] pb-[3px] text-right">
          <div className="tracking-[-0.1px]">10:33 PM</div>
          <div className="tracking-[0.3px]">13-Jan-25</div>
        </div>
        <Bell className="ml-[11px] h-[19px] w-[18px]" />
      </div>
    </footer>
  );
}

export default function App() {
  return (
    <div className="flex h-[1080px] w-[1920px] flex-col overflow-hidden bg-[#56575b] font-['Open_Sans','Noto_Sans',sans-serif]">
      <TabStrip />
      <Toolbar />
      <div className="flex h-[928px] shrink-0 pb-[5px]">
        <Page />
        <Sidebar />
      </div>
      <Taskbar />
    </div>
  );
}
